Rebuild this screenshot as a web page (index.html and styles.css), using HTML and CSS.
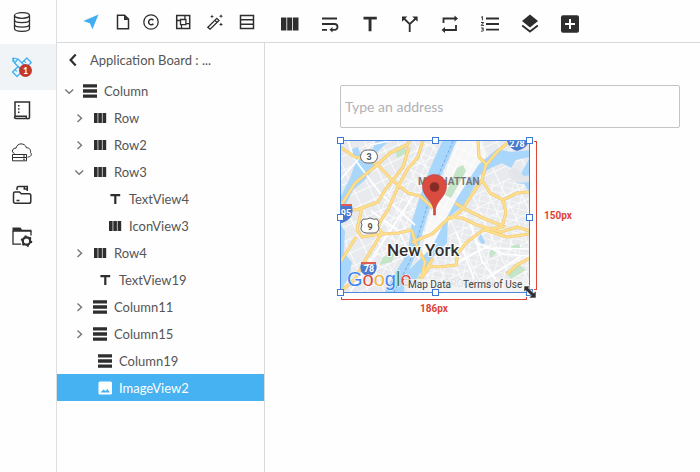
FILE: index.html
```html
<!DOCTYPE html>
<html lang="en">
<head>
<meta charset="utf-8">
<meta name="viewport" content="width=device-width, initial-scale=1">
<title>Application Board</title>
<link rel="stylesheet" href="styles.css">
</head>
<body>
<svg class="defs" aria-hidden="true">
  <symbol id="row" viewBox="0 0 16 16"><path d="M2 3h3.600v10H2zM6.300 3h3.600v10H6.300zM10.600 3h3.600v10h-3.600z"/></symbol>
  <symbol id="column" viewBox="0 0 16 16"><path d="M1 1.200h14v3.400H1zM1 6.300h14v3.400H1zM1 11.400h14v3.400H1z"/></symbol>
  <symbol id="text" viewBox="0 0 16 16"><path d="M3.400 3h9.800v2.200H9.400V13H7.200V5.200H3.400z"/></symbol>
  <symbol id="image" viewBox="0 0 16 16"><path fill-rule="evenodd" d="M3 1.500h10.500q1.500 0 1.500 1.500v10q0 1.500-1.500 1.500H3Q1.500 14.500 1.500 13V3Q1.500 1.500 3 1.500zM3.500 12.500h9.500L10.400 9 8.600 11 6.400 9.400z"/></symbol>
  <symbol id="right" viewBox="0 0 14 14"><path d="M5.500 3.500 9.500 7.200 5.500 11" fill="none" stroke="#777" stroke-width="1.400"/></symbol>
  <symbol id="down" viewBox="0 0 14 14"><path d="M3.300 5.500 7.200 9.300 11.200 5.500" fill="none" stroke="#777" stroke-width="1.400"/></symbol>
</svg>

<div class="app">
  <nav class="rail" aria-label="Sections">
    <button class="rail-item" aria-label="Data"><svg viewBox="0 0 22 22"><g class="line"><ellipse cx="11" cy="4.500" rx="7.500" ry="2.800"/><path d="M3.500 4.500v13c0 3.800 15 3.800 15 0v-13M3.500 8.800c0 3.800 15 3.800 15 0M3.500 13.200c0 3.800 15 3.800 15 0"/></g></svg></button>
    <button class="rail-item active" aria-label="Design, 1 notification"><svg viewBox="0 0 22 22"><g fill="#e4f4fd" stroke="#3faeef" stroke-width="1.200" stroke-linejoin="round"><path d="m1.500 16 14.300-14 4.500 4.500L6 20.500z"/><path d="m4 13.500 1.800 1.800M7 10.500l1.800 1.800M10 7.800l1.800 1.800M13 4.800l1.800 1.800"/><path d="M2 2l5 1 11 11-3.500 3.500L3.500 7z"/><path d="M3.500 7 7 3M2 2v4"/></g></svg><span class="badge">1</span></button>
    <button class="rail-item" aria-label="Documents"><svg viewBox="0 0 22 22"><g class="line"><path d="M4 17V2h14.500v15.500c0 1.500-3.200 1.500-3.200 0v-1.300H5c-2 0-2 2.300 0 2.300h11.500" stroke-width="1.500"/></g><path d="M7 5h1.500v1.500H7zM7 8.200h1.500v1.500H7zM7 11.400h1.500v1.500H7z"/></svg></button>
    <button class="rail-item" aria-label="Cloud"><svg viewBox="0 0 22 22"><g class="line thin"><path d="M3.500 11.500C-.5 10 2 5.500 5 6.200 6 .5 14 .5 15.500 5.800c3.500-.3 4.500 3 4 4.800 2 1.500.5 4.500-3 4.500"/><path d="M1.500 12.500h14v3h-14zM1.500 15.500h14v3.300h-14zM12 14h2M12 17.200h2"/></g></svg></button>
    <button class="rail-item" aria-label="Files"><svg viewBox="0 0 22 22"><g class="line"><path stroke-width="1.500" d="M2.500 9.500q0-1.500 1.500-1.500h4.500l1.800 1.800h7.700q1.800 0 1.800 1.800v5.900q0 1.800-1.800 1.800H4.200q-1.700 0-1.700-1.800zM6 6V4q0-1.500 1.500-1.500h8.800V7M13.300 2.500V5h3M5.500 16.500h3"/></g></svg></button>
    <button class="rail-item" aria-label="Project settings"><svg viewBox="0 0 22 22"><path d="M1.500 1.500h8l1.500 2.200h9.500v2H1.500z"/><g class="line"><path d="M2 5v13.200h8M20 5v4.500"/><circle cx="15.500" cy="15" r="3.700" stroke-width="2.200"/><circle cx="15.500" cy="15" r="4.900" stroke-dasharray="2 3.130" stroke-width="1.800"/></g></svg></button>
  </nav>

  <aside class="panel">
    <div class="tools">
      <button aria-label="Navigate" class="accent"><svg viewBox="0 0 16 16"><path d="M15.500.5.300 7l6.500 2.200 2.700 6z"/></svg></button>
      <button aria-label="Page" class="page-tool"><svg viewBox="0 0 16 16"><path class="line medium" d="M2.500 1.200h7L13.500 5v9.800h-11z"/><path d="M9 1.200 13.500 6H9z"/></svg></button>
      <button aria-label="Component"><svg viewBox="0 0 16 16"><circle class="line" cx="8" cy="8" r="7.200"/><path class="line medium" d="M10.400 9.700a2.700 2.700 0 1 1 0-3.400"/></svg></button>
      <button aria-label="Assets"><svg viewBox="0 0 16 16"><path class="line medium" d="M1.700 1.500h13v13h-13z"/><path class="line" d="M5.500 5.500h5.400v5.200H5.500zM1.700 6.500h3.800M6.500 14.500v-3.800M10.900 9.700h3.800M9.900 1.500v4"/></svg></button>
      <button aria-label="Effects"><svg viewBox="0 0 16 16"><path class="line" d="m.9 13.300 8.900-9 2.200 2.200-8.900 8.700zM7.800 6.200 10 8.400"/><path d="M5 .5 5.600 2 7 2.500 5.600 3 5 4.500 4.400 3 3 2.500 4.400 2zM14 .3l.6 1.300L16 2.200l-1.400.6L14 4.200l-.6-1.400L12 2.200l1.400-.6zM14 8.500l.6 1.300 1.400.6-1.400.6-.6 1.400-.6-1.400-1.400-.6 1.400-.6z"/></svg></button>
      <button aria-label="List"><svg viewBox="0 0 16 16"><path class="line medium" d="M1.500 1.500h13v13h-13zM1.500 5.800h13M1.500 10.200h13"/></svg></button>
    </div>
    <div class="panel-title">
      <button aria-label="Back"><svg viewBox="0 0 12 16"><path class="line heavy" d="M8.700 2.600 3.600 8l5.100 5.400"/></svg></button>
      <h1>Application Board : ...</h1>
    </div>
    <ul class="tree">
      <li class="node"><button aria-label="Collapse"><svg><use href="#down"/></svg></button><svg><use href="#column"/></svg><span>Column</span></li>
      <li class="node level-1"><button aria-label="Expand"><svg><use href="#right"/></svg></button><svg><use href="#row"/></svg><span>Row</span></li>
      <li class="node level-1"><button aria-label="Expand"><svg><use href="#right"/></svg></button><svg><use href="#row"/></svg><span>Row2</span></li>
      <li class="node level-1"><button aria-label="Collapse"><svg><use href="#down"/></svg></button><svg><use href="#row"/></svg><span>Row3</span></li>
      <li class="node leaf-2"><svg><use href="#text"/></svg><span>TextView4</span></li>
      <li class="node leaf-2"><svg><use href="#row"/></svg><span>IconView3</span></li>
      <li class="node level-1"><button aria-label="Expand"><svg><use href="#right"/></svg></button><svg><use href="#row"/></svg><span>Row4</span></li>
      <li class="node leaf-1"><svg><use href="#text"/></svg><span>TextView19</span></li>
      <li class="node level-1"><button aria-label="Expand"><svg><use href="#right"/></svg></button><svg><use href="#column"/></svg><span>Column11</span></li>
      <li class="node level-1"><button aria-label="Expand"><svg><use href="#right"/></svg></button><svg><use href="#column"/></svg><span>Column15</span></li>
      <li class="node leaf-1"><svg><use href="#column"/></svg><span>Column19</span></li>
      <li class="node leaf-1 selected"><svg><use href="#image"/></svg><span>ImageView2</span></li>
    </ul>
  </aside>

  <main class="editor">
    <div class="palette">
      <button aria-label="Row"><svg viewBox="0 0 20 20"><path d="M1 3.500h5.400v13H1zM7.200 3.500h5v13h-5zM13 3.500h5.500v13H13z"/></svg></button>
      <button aria-label="Wrap"><svg viewBox="0 0 20 20"><path class="line bold" d="M2 4.500h15M2 10h12.500c4 0 4 5.800 0 5.800H11M2 15.800h5"/><path d="m9.500 15.800 3-2.800v5.600z"/></svg></button>
      <button aria-label="Text"><svg viewBox="0 0 20 20"><path d="M3.500 2.800h13.300v2.700h-5.300V17.200H8.600V5.500H3.500z"/></svg></button>
      <button aria-label="Condition"><svg viewBox="0 0 20 20"><path class="line bold" d="m4 4.500 5.700 5.700V18M9.700 10.200l6-5.700"/><path d="M2 2.500h5.300L2 7.800zM12.300 2.500h5.300v5.300z"/></svg></button>
      <button aria-label="Repeat"><svg viewBox="0 0 20 20"><path class="line bold" d="M3.500 9V4.500h12M16 11v5H4"/><path d="m14.500 1.500 3.500 3-3.500 3zM5 13l-3.500 3L5 19z"/></svg></button>
      <button aria-label="Numbered list"><svg viewBox="0 0 20 20"><path class="line bold" d="M6 4.500h13M6 10h13M6 15.600h13"/><path class="line thin" d="M1.200 3.300 2.400 2.500v3.800M1 8.500h2.700L1.200 11.400h2.800M1 14h2.500L2.400 15.300c2.200 0 1.800 2.200-1.400 1.800"/></svg></button>
      <button aria-label="Layers"><svg viewBox="0 0 20 20"><path d="m10 .5 8 6.500-8 6.500L2 7z"/><path class="line bold" d="m2.200 11.500 7.800 6 7.800-6"/></svg></button>
      <button aria-label="Add"><svg viewBox="0 0 20 20"><path fill-rule="evenodd" d="M3 1.200h14q2 0 2 2v13.600q0 2-2 2H3q-2 0-2-2V3.200q0-2 2-2zM9 5v4H5v2h4v4h2v-4h4V9h-4V5z"/></svg></button>
    </div>

    <div class="canvas">
      <input class="address" type="text" placeholder="Type an address" aria-label="Address">
      <div class="selection">
        <svg class="map" viewBox="340 140 190 153" role="img" aria-label="Map of New York">
          <defs>
            <pattern id="streets" width="7" height="10" patternUnits="userSpaceOnUse" patternTransform="rotate(25)"><path d="M0 0H7M0 0V10" stroke="#fff" stroke-width="1.300"/></pattern>
            <pattern id="blocks" width="15" height="13" patternUnits="userSpaceOnUse" patternTransform="rotate(-25)"><path d="M0 0H15M0 0V13" stroke="#fff" stroke-width="1.600"/></pattern>
            <pattern id="grid" width="10" height="6" patternUnits="userSpaceOnUse" patternTransform="rotate(12)"><path d="M0 0H10M0 0V6" stroke="#fff" stroke-width="1.200"/></pattern>
            <path id="roads" stroke-linejoin="round" d="M340 147l15 10 14 3 9 5 14 15 16 13 12 3 13 12M340 207l15-24 22-18 13-12 17-8 3-5M340 207q14 5 22 1l16-6 7-12 8-10 10-13 6-20M423 140l-5 17-11 13-9 17-10 23-7 10-3 8 5 6 15-1 14-3M362 207l-5 23 5 7 19-3-15 25-11 20-16 14M356 237l-15 24M478 140l1 17 7 7-4 16-9 13-11 17-12 9M511 140l-14 12-11 13M482 180l8 13 13 7 14-7 12-1M503 200l3 13-4 14-19 3-16 12-9 11-2 12-17 2-9-1-10 14M455 203l12 7 16 8 22 9M448 217l14 1 15 7 24 7 16-5 13 4M485 230l22 7 23-3M507 274l10-9 13-7M412 230l3 12 10 20-3 14 11-18M412 242l20-8 17-16"/>
          </defs>
          <path fill="#e8eaed" d="M340 140h190v153H340z"/>
          <path fill="url(#blocks)" d="M340 140h190v153H340z"/>
          <path fill="url(#grid)" d="M463 215l30-35 37 5v108h-115l20-30z"/>
          <path fill="url(#streets)" d="M385 195l35-52h20l-28 75-18 50-35 20z"/>
          <path fill="#f7f7f8" d="M457 140h25l5 23-24 40-16 25-11 23-15 14 5-40 16-43z"/>
          <path fill="url(#streets)" d="M457 140h25l5 23-24 40-16 25-11 23-15 14 5-40 16-43z"/>
          <path fill="#c4e5c7" d="M457 168l6-3 3 6-15 27-6-3zM395 148l10-3 2 8-10 5zM383 257l12-5-3 10-13 3zM505 272l15-7 6 5-15 9zM511 246l8-2 2 5-9 1zM410 277l8-5 2 6-9 6zM489 253l3-4 4 4-5 5z"/>
          <g fill="#a9d7fb">
            <path d="M443 140h14l-15 34-16 46-8 29-10 24-2 20h-22l13-23 11-18 4-31 13-40 9-22z"/>
            <path d="M376 140h14l-14 13-2 15-9 12-12 10-7 14-6 4v-10l10-20 5-14-3-15 6-2 5 16 9-11z"/>
            <path d="M340 224l5 7-1 22 8 9-3 15-9 15z"/>
            <path d="M530 157l-14 3-5 8-9-5-11 5-11 7-8 16-9 15-15 12-1 25-11 11-18 22-8 12h-20l18-17 24-24 12-24 13-25 22-34 18-15 14 3 19-2zM530 157v36l-6-9-8-1z"/>
            <path d="M481 234l4 8-3 4-4-8z"/>
          </g>
          <path fill="#e2e5e9" d="M508 170l7-2 9 8 6-1v7l-12 1-8-5z"/>
          <path d="M453 141 432 190l-13 43-8 26-17 33" fill="none" stroke="#77a9df" stroke-width="1" stroke-dasharray="3 2"/>
          <path fill="none" stroke="#fff" stroke-width="1.700" d="M348 140l5 17 27 36 35 32M340 180l31-35 22-5M350 292l26-40 40-60M371 211l28 20 12 26M456 232l20 52M470 221l12 40 23 31M454 265l30-17 45 1M475 242l29 12 25 2M480 283l43-28"/>
          <use href="#roads" fill="none" stroke="#edc878" stroke-width="3.200"/>
          <use href="#roads" fill="none" stroke="#ffdf8c" stroke-width="2"/>
          <g fill="#fff" stroke="#666" stroke-width="1"><rect x="360.500" y="150" width="17" height="13" rx="6.500"/><path d="M363 219q3 1 7-1 4 2 7 1l2 3q-2 3 0 6-1 5-5 5h-8q-5-1-5-5 2-3 0-6z"/></g>
          <g class="shield">
            <path fill="#4a79ce" d="M507 140h22q-1 8-12 11-9-3-10-11zM340 206h12q3 13-10 17h-2zM361 264q8 2 15 0 3 8-7 13-11-4-8-13z"/>
            <path fill="#e25a50" d="M340 204h12v2h-12zM361 262h15v2h-15z"/>
            <text x="517" y="147">278</text><text x="346" y="216">95</text><text x="369" y="272">78</text>
          </g>
          <g class="route"><text x="369" y="160">3</text><text x="370" y="230">9</text></g>
          <text class="district" x="418" y="185">MANHATTAN</text>
          <text class="borough" x="444" y="287">BROOKLYN</text>
          <text class="city" x="387" y="256">New York</text>
          <text class="google" x="347" y="286"><tspan fill="#4285f4">G</tspan><tspan fill="#db4a3c">o</tspan><tspan fill="#efb63c">o</tspan><tspan fill="#4285f4">g</tspan><tspan fill="#4f8063">l</tspan><tspan fill="#db4a3c">e</tspan></text>
          <path fill="#f5f5f5" fill-opacity=".72" d="M404 279h126v14H404z"/>
          <g class="credit"><text x="408" y="288">Map Data</text><text x="463" y="288">Terms of Use</text></g>
          <path fill="#da4c40" stroke="#be4036" stroke-width=".6" d="M433.500 215v-6c-1-8-11-13-11-22.500a12 12 0 0 1 24 0c0 9.500-10 14.500-11 22.500v6z"/>
          <circle cx="434.500" cy="187" r="4.800" fill="#842d27"/>
        </svg>
        <span class="handle top left"></span><span class="handle top center"></span><span class="handle top right"></span>
        <span class="handle middle left"></span><span class="handle middle right"></span>
        <span class="handle bottom left"></span><span class="handle bottom center"></span><span class="handle bottom right"></span>
        <span class="measure height"><span>150px</span></span>
        <span class="measure width"><span>186px</span></span>
        <svg class="cursor" viewBox="0 0 14 14" aria-hidden="true"><path d="M1 1h6L5.500 3l5 5L13 6v7H6l2-2.500-5-5L1 7z" stroke="#fff" stroke-width=".6"/></svg>
      </div>
    </div>
  </main>
</div>
</body>
</html>
```
FILE: styles.css
```css
* { box-sizing: border-box; }

body {
  margin: 0;
  background: #fefefe;
  color: #555;
  font: 13px/20px Lato, "Open Sans", sans-serif;
}

button {
  display: grid;
  place-items: center;
  padding: 0;
  border: 0;
  background: none;
  color: inherit;
}

svg { display: block; fill: #2e2e2e; }
.defs { position: absolute; width: 0; height: 0; }
.line { fill: none; stroke: #2e2e2e; stroke-width: 1.3; }
.medium { stroke-width: 1.5; }
.bold { stroke-width: 1.8; }
.heavy { stroke-width: 2.2; }
.thin { stroke-width: 1; }

.app {
  display: grid;
  grid-template-columns: 57px 208px 1fr;
  min-height: 100vh;
}

.rail { border-right: 1px solid #dedede; }
.rail-item { position: relative; width: 100%; height: 42px; padding-right: 12px; }
.rail-item:first-child { height: 44px; }
.rail-item svg { width: 22px; height: 22px; }
.rail-item.active { height: 46px; background: #f0f4f7; }

.badge {
  position: absolute;
  top: 20px;
  left: 19px;
  width: 13px;
  height: 13px;
  border-radius: 50%;
  background: #c3372c;
  color: #fff;
  font: bold 9px/13px Lato, sans-serif;
  text-align: center;
}

.panel { display: flex; flex-direction: column; }
.tools, .palette { height: 43px; border-bottom: 1px solid #d9d9d9; }
.tools { display: flex; align-items: center; gap: 16px; padding-left: 26px; padding-top: 2px; }
.tools svg { width: 16px; height: 16px; }
.page-tool { margin-right: -4px; }
.accent svg { fill: #42aef0; }

.panel-title {
  display: flex;
  align-items: center;
  gap: 11px;
  height: 34px;
  padding-left: 10px;
  border-right: 1px solid #d9d9d9;
}
.panel-title svg { width: 12px; height: 16px; }
.panel-title h1 { margin: 0; font: inherit; }

.tree { flex: 1; margin: 0; padding: 0; border-right: 1px solid #d9d9d9; list-style: none; }
.node { display: flex; align-items: center; gap: 6px; height: 27px; padding-left: 5px; }
.node svg { width: 16px; height: 16px; }
.node button svg { width: 14px; height: 14px; }
.level-1 { padding-left: 15px; }
.leaf-1 { padding-left: 40px; }
.leaf-2 { padding-left: 50px; }
.selected { background: #46b2f1; color: #fff; }
.selected svg { fill: #fff; }

.editor { min-width: 0; }
.palette { display: flex; align-items: center; padding: 6px 0 0 5px; }
.palette button { width: 40px; }
.palette svg { width: 20px; height: 20px; }

.canvas { display: grid; gap: 12px; padding: 42px 20px 20px 75px; }
.address {
  width: 100%;
  height: 43px;
  padding: 0 4px;
  border: 1px solid #c3c3c8;
  border-radius: 2px;
  background: #fefefe;
  font: 14px Lato, sans-serif;
}
.address::placeholder { color: #b2b2b4; opacity: 1; }

.selection { position: relative; width: 190px; }
.map { width: 100%; height: auto; }
.map text { font-family: Roboto, sans-serif; }
.shield text { fill: #fff; font-size: 9px; font-weight: bold; text-anchor: middle; }
.route text { fill: #555; font-size: 9px; font-weight: bold; text-anchor: middle; }
.map .district { fill: #777; font-size: 10px; font-weight: bold; }
.map .borough { fill: #aaa; font-size: 10px; }
.map .city { fill: #303030; stroke: #fff; stroke-width: 2px; paint-order: stroke; font-size: 17px; font-weight: 500; }
.map .google { font-family: "Liberation Sans", sans-serif; font-size: 20px; stroke: #fff; stroke-width: 1px; paint-order: stroke; }
.credit text { fill: #444; font-size: 10px; }

.selection::after { content: ""; position: absolute; inset: 0; border: 1px solid #4b87df; }
.handle {
  position: absolute;
  z-index: 1;
  width: 7px;
  height: 7px;
  border: 1px solid #3c78d8;
  background: #fff;
}
.top { top: -3px; }
.middle { top: calc(50% - 3px); }
.bottom { bottom: -3px; }
.left { left: -3px; }
.center { left: calc(50% - 3px); }
.right { right: -3px; }

.measure { position: absolute; border: 1px solid #dc4437; color: #dc4437; font: bold 10px/12px Roboto, sans-serif; }
.measure span { position: absolute; }
.measure.height { top: 1px; bottom: 3px; left: calc(100% + 4px); width: 3px; border-left: 0; }
.measure.height span { top: calc(50% - 6px); left: 10px; }
.measure.width { top: calc(100% + 4px); left: 1px; right: 3px; height: 3px; border-top: 0; }
.measure.width span { top: 6px; left: 0; right: 0; text-align: center; }
.cursor { position: absolute; z-index: 2; right: -7px; bottom: -6px; width: 14px; height: 14px; }
```
